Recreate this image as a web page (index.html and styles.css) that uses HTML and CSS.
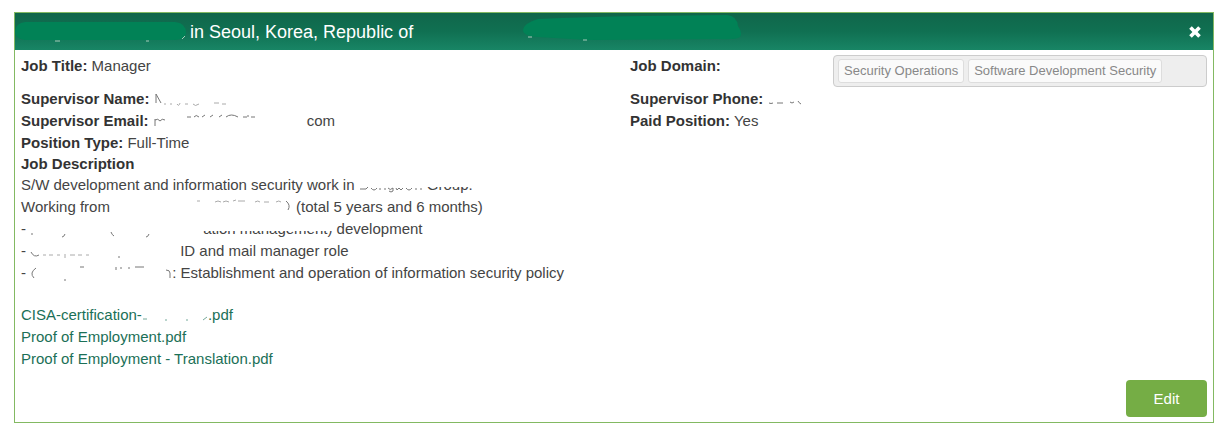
FILE: index.html
```html
<!DOCTYPE html>
<html lang="en">
<head>
<meta charset="utf-8">
<title>Job details</title>
<link rel="stylesheet" href="styles.css">
</head>
<body>
<main class="panel">
  <header class="panel-head">
    <svg class="cover-employer" width="172" height="22" aria-hidden="true"><path d="M10 1H160Q171 2 171 12Q170 19 159 19H10Q0 18 0 10Q1 2 10 1Z" fill="#018256"/><path d="M40 20h5M131 20h3M167 18l3-3" stroke="#a5cbb9" fill="none"/></svg>
    <h1 class="title">in Seoul, Korea, Republic of</h1>
    <svg class="cover-period" width="219" height="26" aria-hidden="true"><path d="M15 4Q60 2 120 1L204 0Q214 1 215 11Q220 18 217 22Q213 25 195 24L65 25L15 22Q0 21 0 15Q1 8 15 4Z" fill="#018256"/><path d="M5 22h4M60 25h4" stroke="#a5cbb9"/></svg>
    <button class="close" type="button" aria-label="Close"><svg width="14" height="14" viewBox="0 0 14 14"><path d="M3.8 1.2 7 4.4l3.2-3.2 2.6 2.6L9.6 7l3.2 3.2-2.6 2.6L7 9.6l-3.2 3.2-2.6-2.6L4.4 7 1.2 3.8Z" fill="#fff"/></svg></button>
  </header>
  <div class="panel-body">
    <div class="row first">
      <div class="field"><b>Job Title:</b> Manager</div>
      <div class="field domain">
        <span class="domain-label" id="domain-label">Job Domain:</span>
        <ul class="chips" aria-labelledby="domain-label"><li class="chip">Security Operations</li><li class="chip">Software Development Security</li></ul>
      </div>
    </div>
    <div class="row">
      <div class="field"><b>Supervisor Name:</b> <svg class="trace" width="84" height="18" aria-hidden="true"><path class="ink" d="M2 4v9M2 4l5 9"/><path class="ink faint" d="M10 14h2m4 0h2m5 0q2 3 3-1m5 1h3m5 0q2 3 6 0M60 13h5m3 1h4"/></svg></div>
      <div class="field"><b>Supervisor Phone:</b> <svg class="trace" width="36" height="18" aria-hidden="true"><path class="ink" d="M1 13q2 1 4 0M9 13h6M22 12q2 2 4 0M30 11q1 2 3 3"/></svg></div>
    </div>
    <div class="row">
      <div class="field"><b>Supervisor Email:</b> <svg class="trace" width="154" height="18" aria-hidden="true"><path class="ink" d="M2 14V7M2 8q3-2 5 1q2-3 5-1M34 5h4M41 5q2-3 5 0M49 5l3-2M57 5l3-2M66 5l3-2M73 5q5-4 12 0M90 5h4m1-2v2M98 5h4"/></svg>com</div>
      <div class="field"><b>Paid Position:</b> Yes</div>
    </div>
    <div class="line"><b>Position Type:</b> Full-Time</div>
    <h2 class="line heading">Job Description</h2>
    <div class="description">
      <p>S/W development and information security work in <svg class="trace" width="64" height="18" aria-hidden="true"><path class="ink" d="M1 13h6l2-2M12 12q3 4 6 0M21 12v2m5-2v2M29 12q2 3 5 0v3q-2 2-4 0M37 12l1 2 2-2 2 2 2-2M47 12q3 4 6 0M57 12v2m5-2v2"/></svg> <span class="half">Group.</span></p>
      <p>Working from<svg class="trace" width="182" height="18" aria-hidden="true"><path class="ink faint" d="M87 3h3M105 4q3-2 6 0M113 4q3-2 6 0M123 3l3-1M128 3h7M145 4q3-2 5 0M154 4h5M166 4q3-2 5 0"/><path class="ink" d="M176 3q5 4 2 9"/></svg> (total 5 years and 6 months)</p>
      <p>- <svg class="trace" width="173" height="18" aria-hidden="true"><path class="ink" d="M1 14h2M35 14q-1 3-3 3M81 12q1 3 3 4M119 14q-1 3-3 3"/></svg><span class="half">ation management)</span> development</p>
      <p>- <svg class="trace" width="150" height="18" aria-hidden="true"><path class="ink" d="M1 10q3 6 8 3"/><path class="ink faint" d="M13 13h3m3 0h4M27 13h3M35 12v4M40 13h5m3 0h4m4 0h3"/><path class="ink" d="M88 15h2"/></svg>ID and mail manager role</p>
      <p>- <svg class="trace" width="142" height="18" aria-hidden="true"><path class="ink" d="M6 4q-7 5-2 10M34 16h2M50 3h4M86 3v3m5-3v2M98 4h2M105 3h9M136 6q4 0 4 3v5"/></svg>: Establishment and operation of information security policy</p>
    </div>
    <ul class="files">
      <li><a href="#cisa">CISA-certification-<svg class="trace" width="66" height="18" aria-hidden="true"><path class="file-ink" d="M1 13h4M23 14h2M44 14h2M61 14l4-3"/></svg>.pdf</a></li>
      <li><a href="#employment">Proof of Employment.pdf</a></li>
      <li><a href="#translation">Proof of Employment - Translation.pdf</a></li>
    </ul>
    <div class="actions"><button class="edit" type="button">Edit</button></div>
  </div>
</main>
</body>
</html>
```
FILE: styles.css
```css
* { box-sizing: border-box; }
body {
  margin: 0;
  padding: 12px 3px 5px 14px;
  background: #fff;
  color: #444;
  font: 15px/22px "Liberation Sans", Arial, sans-serif;
}
.panel { border: 1px solid #83b962; }
.panel-head {
  display: flex;
  align-items: center;
  height: 37px;
  padding-right: 10px;
  background: linear-gradient(#10664a, #107052 50%, #188565);
  color: #fff;
}
.panel-head svg { flex: none; }
.title {
  margin: 0 0 0 3px;
  font-size: 18px;
  font-weight: 400;
  line-height: 22px;
  white-space: nowrap;
}
.cover-period { margin: 0 0 8px 110px; }
.close {
  display: flex;
  margin-left: auto;
  padding: 1px;
  border: 0;
  background: none;
  cursor: pointer;
}
.panel-body { padding: 5px 6px; }
.row {
  display: grid;
  grid-template-columns: 609px 1fr;
}
.first { min-height: 33px; }
.domain {
  display: grid;
  grid-template-columns: 203px 1fr;
  align-items: start;
}
.domain-label, b, .heading { color: #333; font-weight: 700; }
.chips {
  display: flex;
  gap: 4px;
  min-height: 32px;
  margin: 0;
  padding: 3px 4px;
  border: 1px solid #ccc;
  border-radius: 4px;
  background: #eee;
  list-style: none;
}
.chip {
  padding: 0 5px;
  border: 1px solid #ddd;
  border-radius: 3px;
  background: #fafafa;
  color: #888;
  font-size: 13px;
  line-height: 22px;
  white-space: nowrap;
}
.line { line-height: 21px; }
.heading { margin: 0; font-size: 15px; }
.description p { margin: 0; }
.trace { vertical-align: -4px; }
.ink, .file-ink { fill: none; stroke: #777; }
.faint { stroke: #aaa; }
.file-ink { stroke: #75a99a; }
.half {
  display: inline-block;
  height: 22px;
  vertical-align: top;
  clip-path: inset(13px 0 0 0);
}
.files { margin: 20px 0 0; padding: 0; list-style: none; }
.files a { color: #1b7057; text-decoration: none; }
.actions { display: flex; justify-content: flex-end; margin-top: 10px; }
.edit {
  width: 81px;
  height: 37px;
  border: 0;
  border-radius: 4px;
  background: #75ad45;
  color: #fff;
  font: 15px/20px "Liberation Sans", Arial, sans-serif;
  cursor: pointer;
}
```
